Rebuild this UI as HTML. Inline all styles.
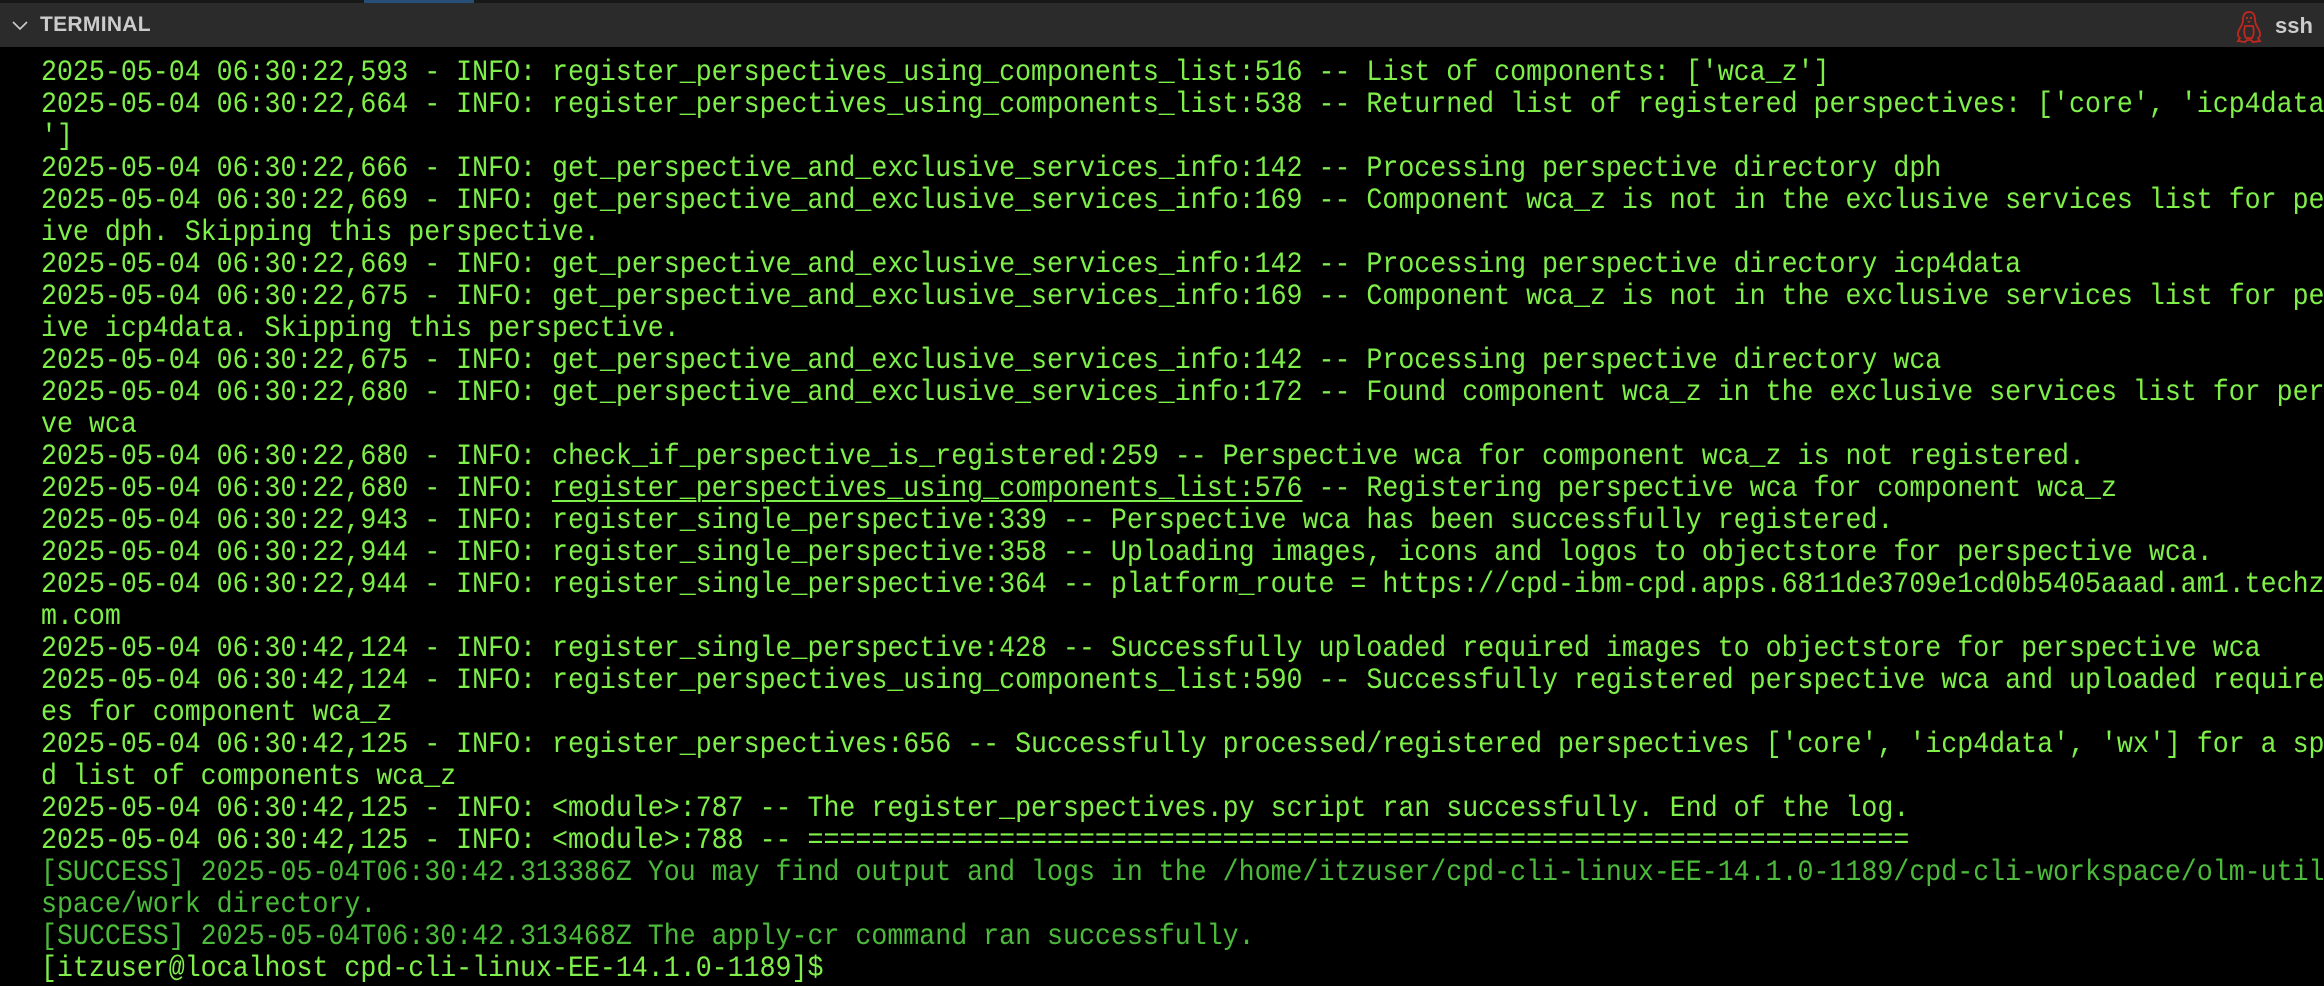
<!DOCTYPE html>
<html><head><meta charset="utf-8"><style>
html,body{margin:0;padding:0;background:#000;width:2324px;height:986px;overflow:hidden}
.top{position:absolute;left:0;top:0;width:2324px;height:3px;background:#181818}
.tab{position:absolute;left:364px;top:0;width:110px;height:3px;background:#264f78}
.hdr{position:absolute;left:0;top:3px;width:2324px;height:44px;background:#2b2b2b}
.ttl{position:absolute;left:40px;top:10px;font:bold 21px "Liberation Sans",sans-serif;color:#cccccc;letter-spacing:0.3px}
.chev{position:absolute;left:10px;top:12px}
.ssh{position:absolute;left:2275px;top:10px;font:bold 22px "Liberation Sans",sans-serif;color:#cccccc}
.pg{position:absolute;left:2235px;top:7px}
.wrap{position:absolute;left:0;top:0;width:2324px;height:986px;overflow:hidden}
pre{position:absolute;left:41px;top:57px;margin:0;font-family:"Liberation Mono",monospace;font-size:30px;line-height:32px;color:#7ff04a;white-space:pre;transform:scaleX(0.887);transform-origin:0 0}
.s{color:#4cbb3b}
u{text-decoration-thickness:2px;text-underline-offset:4px}
</style></head><body>
<div class="top"></div><div class="tab"></div>
<div class="hdr">
<svg class="chev" width="20" height="20" viewBox="0 0 20 20"><path d="M3 7 L10 14 L17 7" fill="none" stroke="#cccccc" stroke-width="1.6"/></svg>
<div class="ttl">TERMINAL</div>
<svg class="pg" width="28" height="34" viewBox="0 0 28 34"><path d="M14 2 C9 2 8 6 8 10 C8 14 6 16 4 20 C2 24 3 27 5 28 L3 31 L10 32 L12 30 L16 30 L18 32 L25 31 L23 28 C25 27 26 24 24 20 C22 16 20 14 20 10 C20 6 19 2 14 2 Z M10 16 C9 20 9 25 11 28 L17 28 C19 25 19 20 18 16 Z" fill="none" stroke="#c0281f" stroke-width="1.8"/><circle cx="12" cy="8" r="1.2" fill="#c0281f"/><circle cx="16" cy="8" r="1.2" fill="#c0281f"/><path d="M12 11 L14 13 L16 11 Z" fill="#c0281f"/></svg>
<div class="ssh">ssh</div>
</div>
<div class="wrap">
<pre>2025-05-04 06:30:22,593 - INFO: register_perspectives_using_components_list:516 -- List of components: ['wca_z']
2025-05-04 06:30:22,664 - INFO: register_perspectives_using_components_list:538 -- Returned list of registered perspectives: ['core', 'icp4data
']
2025-05-04 06:30:22,666 - INFO: get_perspective_and_exclusive_services_info:142 -- Processing perspective directory dph
2025-05-04 06:30:22,669 - INFO: get_perspective_and_exclusive_services_info:169 -- Component wca_z is not in the exclusive services list for pe
ive dph. Skipping this perspective.
2025-05-04 06:30:22,669 - INFO: get_perspective_and_exclusive_services_info:142 -- Processing perspective directory icp4data
2025-05-04 06:30:22,675 - INFO: get_perspective_and_exclusive_services_info:169 -- Component wca_z is not in the exclusive services list for pe
ive icp4data. Skipping this perspective.
2025-05-04 06:30:22,675 - INFO: get_perspective_and_exclusive_services_info:142 -- Processing perspective directory wca
2025-05-04 06:30:22,680 - INFO: get_perspective_and_exclusive_services_info:172 -- Found component wca_z in the exclusive services list for per
ve wca
2025-05-04 06:30:22,680 - INFO: check_if_perspective_is_registered:259 -- Perspective wca for component wca_z is not registered.
2025-05-04 06:30:22,680 - INFO: <u>register_perspectives_using_components_list:576</u> -- Registering perspective wca for component wca_z
2025-05-04 06:30:22,943 - INFO: register_single_perspective:339 -- Perspective wca has been successfully registered.
2025-05-04 06:30:22,944 - INFO: register_single_perspective:358 -- Uploading images, icons and logos to objectstore for perspective wca.
2025-05-04 06:30:22,944 - INFO: register_single_perspective:364 -- platform_route = https://cpd-ibm-cpd.apps.6811de3709e1cd0b5405aaad.am1.techz
m.com
2025-05-04 06:30:42,124 - INFO: register_single_perspective:428 -- Successfully uploaded required images to objectstore for perspective wca
2025-05-04 06:30:42,124 - INFO: register_perspectives_using_components_list:590 -- Successfully registered perspective wca and uploaded require
es for component wca_z
2025-05-04 06:30:42,125 - INFO: register_perspectives:656 -- Successfully processed/registered perspectives ['core', 'icp4data', 'wx'] for a sp
d list of components wca_z
2025-05-04 06:30:42,125 - INFO: &lt;module&gt;:787 -- The register_perspectives.py script ran successfully. End of the log.
2025-05-04 06:30:42,125 - INFO: &lt;module&gt;:788 -- =====================================================================
<span class="s">[SUCCESS] 2025-05-04T06:30:42.313386Z You may find output and logs in the /home/itzuser/cpd-cli-linux-EE-14.1.0-1189/cpd-cli-workspace/olm-util
space/work directory.
[SUCCESS] 2025-05-04T06:30:42.313468Z The apply-cr command ran successfully.</span>
[itzuser@localhost cpd-cli-linux-EE-14.1.0-1189]$</pre>
</div>
</body></html>
